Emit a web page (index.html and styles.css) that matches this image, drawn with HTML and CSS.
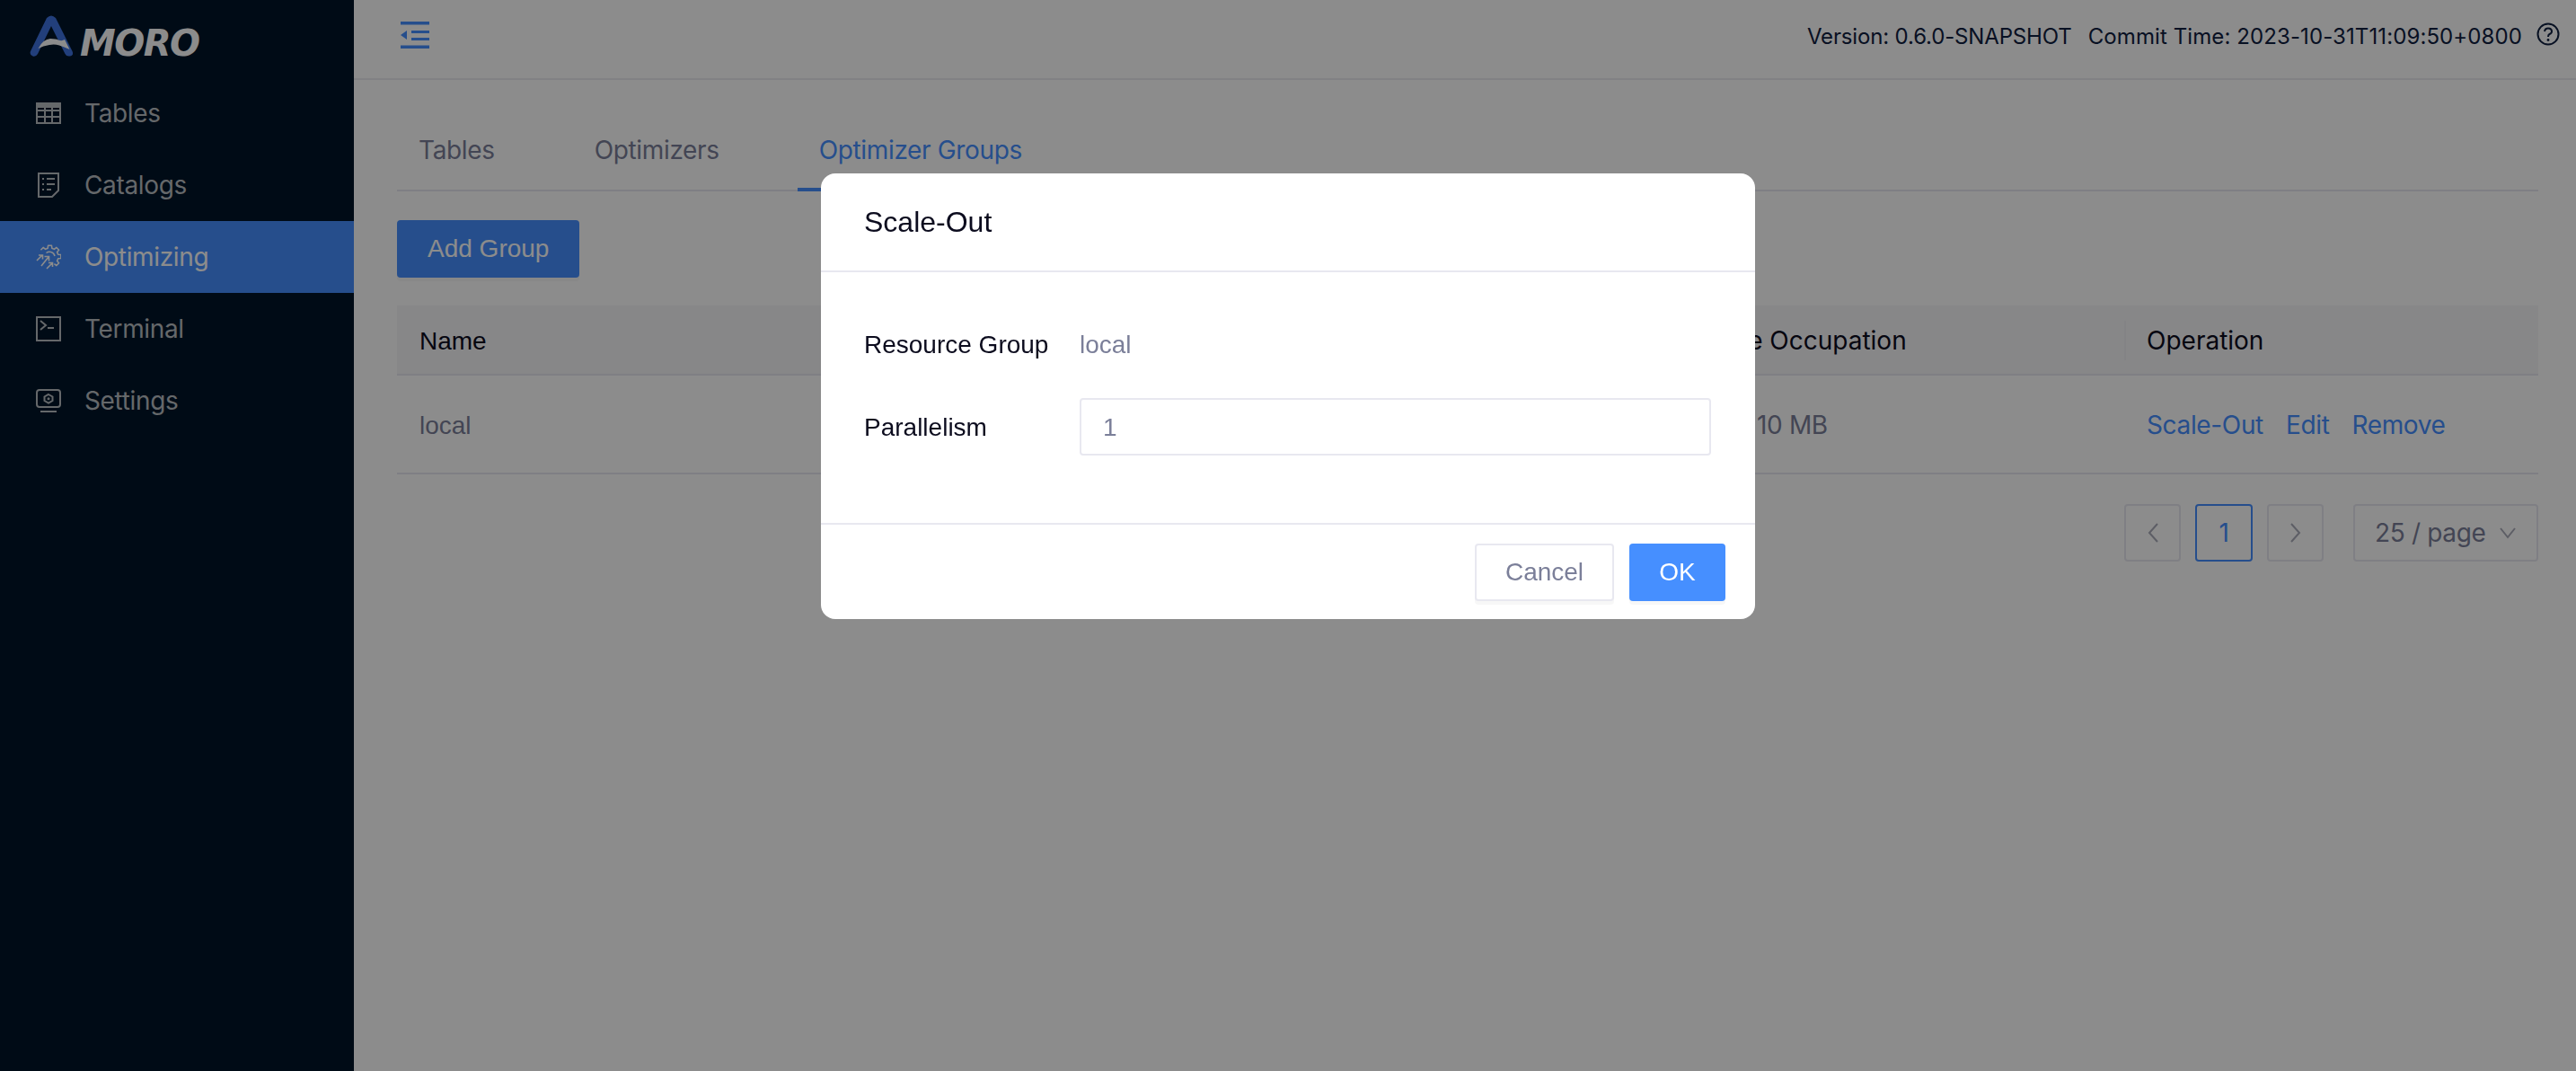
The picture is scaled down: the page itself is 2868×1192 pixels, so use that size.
FILE: index.html
```html
<!DOCTYPE html>
<html lang="en">
<head>
<meta charset="utf-8">
<title>Amoro - Optimizer Groups</title>
<link rel="stylesheet" href="styles.css">
</head>
<body>
<div class="app">
  <aside class="sidebar">
    <div class="logo">
      <svg class="logo-mark" viewBox="0 0 52 50" width="52" height="50" aria-hidden="true">
        <path fill="#3f74e0" d="M19 4 Q24 -1 29 4 L47.500 41 Q49.500 46 44.500 46.500 Q41 47 39.500 44 L24 13 L9 44 Q7 47.500 3.500 46.500 Q-0.500 45 1 41 Z"/>
        <path fill="#fff" d="M9.500 38 Q15 27.500 23 27 Q29 27 32 28.500 Q36 30 39 28 L44.500 39 Q38.500 36 33 34.500 Q28 33 22 34 Q15 35 9.500 38 Z"/>
      </svg>
      <span class="logo-text">MORO</span>
    </div>
    <nav class="menu">
      <a class="menu-item">
        <svg class="menu-icon" viewBox="0 0 28 24" aria-hidden="true"><path fill="currentColor" d="M1 1h26v5H1z"/><path fill="none" stroke="currentColor" stroke-width="2" d="M1 1h26v22H1zM1 9h26M1 16h26M10 5v18M18 5v18"/></svg>
        <span>Tables</span>
      </a>
      <a class="menu-item">
        <svg class="menu-icon" viewBox="0 0 28 28" aria-hidden="true"><path fill="none" stroke="currentColor" stroke-width="2" d="M3 1h22v19l-7 7H3z"/><path fill="none" stroke="currentColor" stroke-width="2" d="M7 7h2M12 7h9M7 13h2M12 13h9M7 19h2M12 19h5"/></svg>
        <span>Catalogs</span>
      </a>
      <a class="menu-item is-active">
        <svg class="menu-icon" viewBox="0 0 28 28" aria-hidden="true">
          <path fill="none" stroke="currentColor" stroke-width="1.500" stroke-linejoin="round" d="M5.400 6.200 L8.100 3.400 L10.600 5.400 L13.200 4.300 L13.500 1.200 L17.500 1.200 L17.800 4.300 L20.400 5.400 L22.900 3.400 L25.600 6.200 L23.600 8.600 L24.700 11.200 L27.900 11.500 L27.900 15.500 L24.700 15.800 L23.600 18.400 L25.600 20.800 L22.900 23.600 L20.400 21.600"/>
          <path fill="none" stroke="currentColor" stroke-width="1.500" d="M11.500 9.500 A6 6 0 0 1 21 13"/>
          <path fill="none" stroke="currentColor" stroke-width="1.600" d="M1 18 L7 12 M3 12 H7.500 V16.500 M6 24 L14 14 M9.500 13.500 H14.500 V18.500 M12 27 L18 21 M14 20.500 H18.500 V25"/>
        </svg>
        <span>Optimizing</span>
      </a>
      <a class="menu-item">
        <svg class="menu-icon" viewBox="0 0 28 28" aria-hidden="true"><path fill="none" stroke="currentColor" stroke-width="2" d="M1 1h26v26H1z"/><path fill="none" stroke="currentColor" stroke-width="2" d="M5 5l6 5-6 5M13 13h7"/></svg>
        <span>Terminal</span>
      </a>
      <a class="menu-item">
        <svg class="menu-icon" viewBox="0 0 28 26" aria-hidden="true"><rect x="1" y="1" width="26" height="19" rx="3" fill="none" stroke="currentColor" stroke-width="2"/><path fill="none" stroke="currentColor" stroke-width="2" d="M14 6l4.500 2.500v4.500L14 15.500 9.500 13V8.500z"/><circle cx="14" cy="10.700" r="1.500" fill="currentColor"/><path stroke="currentColor" stroke-width="2" d="M5 25h18"/></svg>
        <span>Settings</span>
      </a>
    </nav>
  </aside>

  <main class="main">
    <header class="topbar">
      <svg class="collapse-icon" viewBox="0 0 32 30" aria-hidden="true"><path fill="#468fff" d="M0 0h32v3.500H0zM12 10h20v3H12zM12 18h20v3H12zM0 26.500h32V30H0zM7 10v10L0 15z"/></svg>
      <div class="version">
        <span class="version-name">Version: 0.6.0-SNAPSHOT</span>
        <span>Commit Time: 2023-10-31T11:09:50+0800</span>
        <svg class="help-icon" viewBox="0 0 26 26" aria-hidden="true"><circle cx="13" cy="13" r="11.500" fill="none" stroke="currentColor" stroke-width="2"/><path fill="none" stroke="currentColor" stroke-width="2" d="M9 10 Q9.500 6.500 13 6.500 Q17 6.500 17 10 Q17 12 14.500 13 Q13 13.800 13 16"/><circle cx="13" cy="19.500" r="1.400" fill="currentColor"/></svg>
      </div>
    </header>

    <section class="content">
      <div class="tabs">
        <a class="tab">Tables</a>
        <a class="tab">Optimizers</a>
        <a class="tab is-active">Optimizer Groups</a>
      </div>

      <button class="btn btn-add" type="button">Add Group</button>

      <div class="table">
        <div class="cell head helv">Name</div>
        <div class="cell head occ-head">Resource Occupation</div>
        <div class="cell head has-sep">Operation</div>
        <div class="cell body helv">local</div>
        <div class="cell body occ-value">10 MB</div>
        <div class="cell body ops"><a>Scale-Out</a><a>Edit</a><a>Remove</a></div>
      </div>

      <div class="pagination">
        <span class="page-box"><svg class="chev" viewBox="0 0 14 24" aria-hidden="true"><path d="M12 2L3 12l9 10"/></svg></span>
        <span class="page-box is-current">1</span>
        <span class="page-box"><svg class="chev" viewBox="0 0 14 24" aria-hidden="true"><path d="M2 2l9 10-9 10"/></svg></span>
        <span class="page-size">25 / page<svg class="chev-down" viewBox="0 0 20 14" aria-hidden="true"><path d="M2 2l8 10 8-10"/></svg></span>
      </div>
    </section>
  </main>
</div>

<div class="overlay">
  <div class="modal">
    <div class="modal-head">Scale-Out</div>
    <div class="modal-body">
      <div class="form-row">
        <label class="form-label">Resource Group</label>
        <span class="form-value">local</span>
      </div>
      <div class="form-row">
        <label class="form-label">Parallelism</label>
        <div class="form-input">1</div>
      </div>
    </div>
    <div class="modal-foot">
      <button class="btn btn-cancel" type="button">Cancel</button>
      <button class="btn btn-ok" type="button">OK</button>
    </div>
  </div>
</div>
</body>
</html>
```

FILE: styles.css
```css
* { box-sizing: border-box; }
html, body { margin: 0; height: 100%; overflow: hidden; }
body {
  font-family: Inter, "Liberation Sans", sans-serif;
  font-size: 28px;
  letter-spacing: -0.35px;
  color: #7b7f99;
  background: #fff;
}
.app { display: flex; height: 100vh; }
.helv { font-family: "Liberation Sans", Arial, sans-serif; letter-spacing: 0; }

.sidebar { width: 394px; flex: none; background: #001529; color: #b9bdc2; }
.logo { height: 86px; display: flex; align-items: flex-start; padding: 16px 0 0 33px; }
.logo-mark { display: block; flex: none; }
.logo-text {
  font-family: "DejaVu Sans", sans-serif;
  font-weight: 700;
  font-style: italic;
  font-size: 40px;
  line-height: 46px;
  color: #fff;
  margin: 9px 0 0 4px;
  letter-spacing: -1.5px;
}
.menu-item { height: 80px; display: flex; align-items: center; gap: 26px; padding-left: 40px; }
.menu-item.is-active { background: #468fff; color: #fff; }
.menu-icon { width: 28px; height: 28px; flex: none; }

.main { flex: 1; min-width: 0; display: flex; flex-direction: column; }
.topbar {
  height: 89px;
  flex: none;
  display: flex;
  justify-content: space-between;
  align-items: flex-start;
  padding: 24px 18px 0 52px;
  border-bottom: 2px solid #ececf1;
}
.collapse-icon { width: 32px; height: 30px; }
.version { display: flex; align-items: center; gap: 18px; color: #102040; font-size: 24px; letter-spacing: .1px; line-height: 34px; }
.version-name { letter-spacing: -0.15px; }
.help-icon { width: 26px; height: 26px; margin: -6px 0 0 -2px; }

.content { flex: 1; padding: 33px 42px 0 48px; }
.tabs { display: flex; height: 91px; border-bottom: 2px solid #e8e8f0; }
.tab {
  height: 91px;
  padding: 3px 24px 0;
  margin-right: 63px;
  display: flex;
  align-items: center;
  border-bottom: 4px solid transparent;
}
.tab.is-active { color: #468fff; border-bottom-color: #468fff; margin-right: 0; }

.btn {
  font-family: "Liberation Sans", Arial, sans-serif;
  font-size: 28px;
  letter-spacing: 0;
  display: block;
  border-radius: 4px;
  height: 64px;
  padding: 0 32px;
  border: 2px solid transparent;
  box-shadow: 0 4px 0 rgba(0, 0, 0, .03);
}
.btn-add { margin-top: 32px; background: #468fff; color: #fff; }

.table { display: grid; grid-template-columns: 1375px 548px 1fr; margin-top: 31px; }
.cell { display: flex; align-items: center; padding: 2px 0 0 25px; }
.cell.helv { padding-top: 4px; }
.head { position: relative; height: 78px; background: #f6f6f8; border-bottom: 2px solid #e8e8f0; color: #0c0c1e; white-space: nowrap; letter-spacing: 0; }
.occ-head { padding-left: 21px; }
.has-sep::before {
  content: "";
  position: absolute;
  left: 0;
  top: 17px;
  width: 2px;
  height: 44px;
  background: #eeeef2;
}
.body { height: 110px; border-bottom: 2px solid #e8e8f0; }
.occ-value { padding-left: 139px; }
.ops { gap: 25px; color: #468fff; }

.pagination { display: flex; justify-content: flex-end; align-items: center; gap: 16px; margin-top: 33px; }
.page-box {
  width: 63px;
  height: 64px;
  display: flex;
  align-items: center;
  justify-content: center;
  border: 2px solid #e8e8f0;
  border-radius: 4px;
}
.page-box.is-current { width: 64px; border-color: #468fff; color: #468fff; }
.chev { width: 14px; height: 24px; fill: none; stroke: #a9abb9; stroke-width: 2; }
.page-size {
  width: 206px;
  height: 64px;
  margin-left: 17px;
  display: flex;
  align-items: center;
  gap: 15px;
  padding-left: 22px;
  border: 2px solid #e8e8f0;
  border-radius: 4px;
}
.chev-down { width: 20px; height: 14px; fill: none; stroke: #a9abb9; stroke-width: 2; }

.overlay {
  position: fixed;
  inset: 0;
  background: rgba(0, 0, 0, .45);
  display: flex;
  justify-content: center;
  align-items: flex-start;
  padding-top: 193px;
}
.modal { width: 1040px; background: #fff; border-radius: 16px; overflow: hidden; font-family: "Liberation Sans", Arial, sans-serif; letter-spacing: 0; }
.modal-head {
  height: 110px;
  padding: 0 48px;
  display: flex;
  align-items: center;
  font-size: 32px;
  color: #0c0c1e;
  border-bottom: 2px solid #e8e8f0;
}
.modal-body { height: 281px; padding: 48px 49px 0 48px; border-bottom: 2px solid #e8e8f0; display: flex; flex-direction: column; gap: 28px; }
.form-row { display: flex; align-items: center; height: 64px; padding-top: 1px; }
.form-label { width: 240px; flex: none; color: #0c0c1e; }
.form-input {
  flex: 1;
  height: 64px;
  margin-top: -1px;
  padding: 1px 0 0 24px;
  display: flex;
  align-items: center;
  border: 2px solid #e8e8f0;
  border-radius: 4px;
}
.modal-foot { height: 105px; display: flex; justify-content: flex-end; gap: 17px; padding: 21px 33px 0 0; }
.btn-cancel { width: 155px; padding: 0; background: #fff; border-color: #e8e8f0; color: #7b7f99; }
.btn-ok { width: 107px; padding: 0; background: #468fff; color: #fff; }
```
